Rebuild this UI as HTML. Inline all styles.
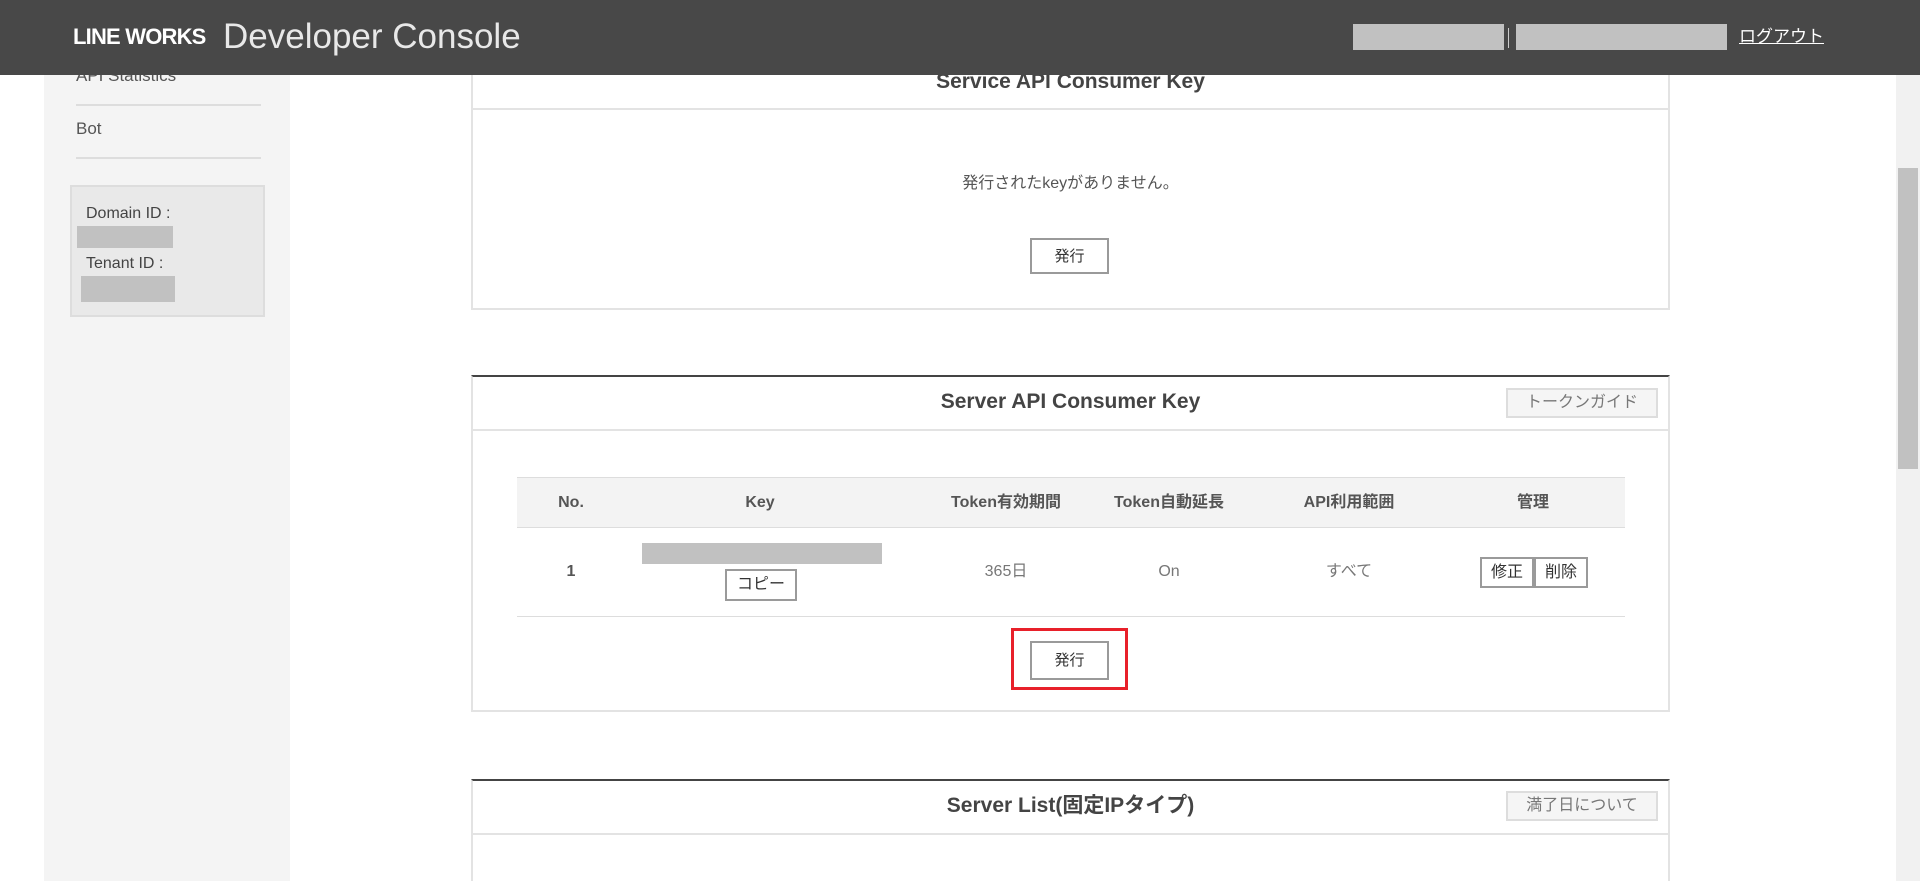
<!DOCTYPE html>
<html><head><meta charset="utf-8"><style>
*{box-sizing:border-box;margin:0;padding:0}
html,body{width:1920px;height:881px;overflow:hidden}
body{background:#fff;font-family:"Liberation Sans","Noto Sans CJK JP",sans-serif;color:#555;position:relative;line-height:1.2}
.a{position:absolute}
.hdr{left:0;top:0;width:1920px;height:75px;background:#484848;z-index:5}
.g{background:#c1c1c1}
.side{left:44px;top:0;width:246px;height:881px;background:#f4f4f4}
.panel{border:2px solid #e3e3e3;background:#fff}
.btn{border:2px solid #9a9a9a;background:#fff;font-size:15px;color:#333;display:flex;align-items:center;justify-content:center;line-height:1}
.gbtn{border:2px solid #ddd;background:#f5f5f5;font-size:16px;color:#777;display:flex;align-items:center;justify-content:center;line-height:1}
.t{font-weight:bold;font-size:21px;color:#444;text-align:center;width:1199px;left:471px;line-height:24px}
.th,.td{font-size:16px;text-align:center;width:200px;line-height:20px;height:20px}
.th{font-weight:bold;color:#555}
.td{color:#777}
</style></head><body>
<div class="a hdr">
 <div class="a" style="left:73px;top:25px;color:#fff;font-weight:bold;font-size:22px;letter-spacing:-0.8px;line-height:24px">LINE WORKS</div>
 <div class="a" style="left:223px;top:17px;color:#e8e8e8;font-size:35px;line-height:40px">Developer Console</div>
 <div class="a g" style="left:1353px;top:24px;width:151px;height:26px"></div>
 <div class="a" style="left:1508px;top:28px;width:1px;height:20px;background:#ccc"></div>
 <div class="a g" style="left:1516px;top:24px;width:211px;height:26px"></div>
 <div class="a" style="left:1739px;top:27px;color:#fff;font-size:17px;text-decoration:underline;line-height:20px">ログアウト</div>
</div>
<div class="a" style="left:1896px;top:75px;width:24px;height:806px;background:#f1f1f1"></div>
<div class="a" style="left:1898px;top:168px;width:20px;height:301px;background:#c1c1c1"></div>
<div class="a side">
 <div class="a" style="left:32px;top:66px;font-size:17px;color:#555">API Statistics</div>
 <div class="a" style="left:32px;top:104px;width:185px;height:2px;background:#ddd"></div>
 <div class="a" style="left:32px;top:119px;font-size:17px;color:#555">Bot</div>
 <div class="a" style="left:32px;top:157px;width:185px;height:2px;background:#ddd"></div>
 <div class="a" style="left:26px;top:185px;width:195px;height:132px;background:#e9e9e9;border:2px solid #ddd">
  <div class="a" style="left:14px;top:17px;font-size:16px;color:#444">Domain ID :</div>
  <div class="a g" style="left:5px;top:39px;width:96px;height:22px"></div>
  <div class="a" style="left:14px;top:67px;font-size:16px;color:#444">Tenant ID :</div>
  <div class="a g" style="left:9px;top:89px;width:94px;height:26px"></div>
 </div>
</div>
<!-- panel 1 -->
<div class="a panel" style="left:471px;top:40px;width:1199px;height:270px"></div>
<div class="a" style="left:473px;top:108px;width:1195px;height:2px;background:#e3e3e3"></div>
<div class="a t" style="top:70px">Service API Consumer Key</div>
<div class="a" style="left:471px;top:174px;width:1199px;text-align:center;font-size:16px;color:#555;line-height:20px">発行されたkeyがありません。</div>
<div class="a btn" style="left:1030px;top:238px;width:79px;height:36px">発行</div>
<!-- panel 2 -->
<div class="a panel" style="left:471px;top:375px;width:1199px;height:337px;border-top:2px solid #444"></div>
<div class="a" style="left:473px;top:429px;width:1195px;height:2px;background:#e3e3e3"></div>
<div class="a t" style="top:390px">Server API Consumer Key</div>
<div class="a gbtn" style="left:1506px;top:388px;width:152px;height:30px">トークンガイド</div>
<div class="a" style="left:517px;top:477px;width:1108px;height:51px;background:#f3f3f3;border-top:1px solid #ddd;border-bottom:1px solid #ddd"></div>
<div class="a th" style="left:471px;top:493px">No.</div>
<div class="a th" style="left:660px;top:493px">Key</div>
<div class="a th" style="left:906px;top:493px">Token有効期間</div>
<div class="a th" style="left:1069px;top:493px">Token自動延長</div>
<div class="a th" style="left:1249px;top:493px">API利用範囲</div>
<div class="a th" style="left:1433px;top:493px">管理</div>
<div class="a th" style="left:471px;top:562px">1</div>
<div class="a g" style="left:642px;top:543px;width:240px;height:21px"></div>
<div class="a btn" style="left:725px;top:569px;width:72px;height:32px;font-size:16px">コピー</div>
<div class="a td" style="left:906px;top:562px">365日</div>
<div class="a td" style="left:1069px;top:562px">On</div>
<div class="a td" style="left:1249px;top:562px">すべて</div>
<div class="a btn" style="left:1480px;top:557px;width:54px;height:31px;font-size:16px">修正</div>
<div class="a btn" style="left:1534px;top:557px;width:54px;height:31px;font-size:16px">削除</div>
<div class="a" style="left:517px;top:616px;width:1108px;height:1px;background:#ddd"></div>
<div class="a" style="left:1011px;top:628px;width:117px;height:62px;border:3px solid #e8202a"></div>
<div class="a btn" style="left:1030px;top:641px;width:79px;height:39px">発行</div>
<!-- panel 3 -->
<div class="a panel" style="left:471px;top:779px;width:1199px;height:102px;border-top:2px solid #444;border-bottom:none"></div>
<div class="a" style="left:473px;top:833px;width:1195px;height:2px;background:#e3e3e3"></div>
<div class="a t" style="top:794px">Server List(固定IPタイプ)</div>
<div class="a gbtn" style="left:1506px;top:791px;width:152px;height:30px">満了日について</div>
</body></html>
